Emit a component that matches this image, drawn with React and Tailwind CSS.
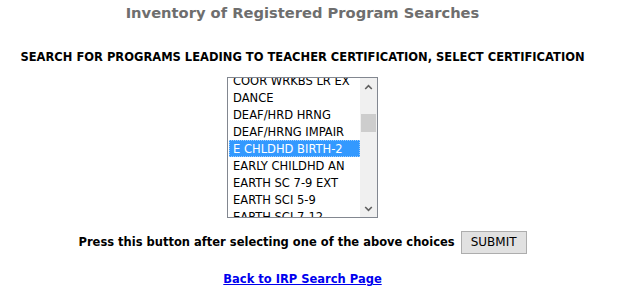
const certs = [
  "COOR WRKBS LR EX",
  "DANCE",
  "DEAF/HRD HRNG",
  "DEAF/HRNG IMPAIR",
  "E CHLDHD BIRTH-2",
  "EARLY CHILDHD AN",
  "EARTH SC 7-9 EXT",
  "EARTH SCI 5-9",
  "EARTH SCI 7-12",
];

function ListBox() {
  return (
    <div className="flex h-[141px] w-[151px] overflow-hidden border border-[#828790] bg-white">
      <div className="flex-1 overflow-hidden">
        <ul className="-mt-[6px] pl-px">
          {certs.map((c) =>
            c === "E CHLDHD BIRTH-2" ? (
              <li key={c} className="h-[17px] whitespace-nowrap border border-dotted border-[#99ccff] bg-[#3399ff] pl-[3px] leading-[15px] text-white">
                {c}
              </li>
            ) : (
              <li key={c} className="h-[17px] whitespace-nowrap pl-1 leading-[17px] text-black">
                {c}
              </li>
            )
          )}
        </ul>
      </div>
      <div className="flex w-[17px] flex-col bg-[#f0f0f0]">
        <div className="flex h-[17px] items-center justify-center">
          <svg width="9" height="6" viewBox="0 0 9 6"><path d="M1.2 5 L4.5 1.6 L7.8 5" fill="none" stroke="#606060" strokeWidth="1.6" /></svg>
        </div>
        <div className="flex-1 pt-[19px]">
          <div className="mx-auto h-[18px] w-[15px] bg-[#cdcdcd]" />
        </div>
        <div className="flex h-[17px] items-center justify-center">
          <svg width="9" height="6" viewBox="0 0 9 6"><path d="M1.2 1 L4.5 4.4 L7.8 1" fill="none" stroke="#606060" strokeWidth="1.6" /></svg>
        </div>
      </div>
    </div>
  );
}

export default function App() {
  return (
    <div className="min-h-screen w-[605px] bg-white font-['DejaVu_Sans',Verdana,sans-serif]">
      <h1 className="pt-[3px] text-center text-[14.7px] font-bold leading-[20px] text-[#6e6e6e]">
        Inventory of Registered Program Searches
      </h1>
      <p className="mt-[27px] text-center text-[11.5px] font-bold leading-[14px] text-black">
        SEARCH FOR PROGRAMS LEADING TO TEACHER CERTIFICATION, SELECT CERTIFICATION
      </p>
      <div className="mt-[13px] flex justify-center text-[12.8px] font-stretch-condensed">
        <ListBox />
      </div>
      <div className="mt-[13px] flex items-center justify-center gap-[6px]">
        <span className="text-[11.5px] font-bold text-black">Press this button after selecting one of the above choices</span>
        <button className="h-[23px] border border-[#adadad] bg-[#e1e1e1] px-[9px] text-[12px] leading-[21px] text-black">
          SUBMIT
        </button>
      </div>
      <div className="mt-[16px] text-center leading-[15px]">
        <a href="#" className="text-[11.5px] font-bold text-[#0000ee] underline">
          Back to IRP Search Page
        </a>
      </div>
    </div>
  );
}
